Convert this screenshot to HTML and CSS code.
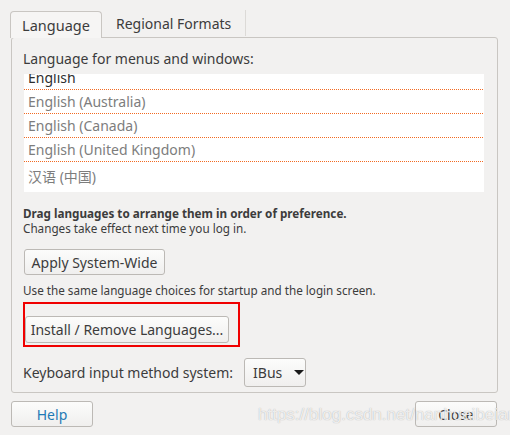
FILE: index.html
```html
<!DOCTYPE html>
<html>
<head>
<meta charset="utf-8">
<link rel="stylesheet" href="styles.css">
</head>
<body>
<div class="dialog">
  <div class="tabs">
    <div class="tab active">Language</div>
    <div class="tab">Regional Formats</div>
    <div class="tab-sep"></div>
  </div>
  <div class="panel">
    <div class="label">Language for menus and windows:</div>
    <div class="list">
      <div class="list-inner">
        <div class="row first">English</div>
        <div class="row">English (Australia)</div>
        <div class="row">English (Canada)</div>
        <div class="row">English (United Kingdom)</div>
        <div class="row last">汉语 (中国)</div>
      </div>
    </div>
    <div class="hint-bold">Drag languages to arrange them in order of preference.</div>
    <div class="hint">Changes take effect next time you log in.</div>
    <button class="btn apply">Apply System-Wide</button>
    <div class="hint use">Use the same language choices for startup and the login screen.</div>
    <div class="redbox">
      <button class="btn install">Install / Remove Languages...</button>
    </div>
    <div class="kbd">
      <span class="kbd-label">Keyboard input method system:</span>
      <button class="btn combo">IBus<span class="arrow"></span></button>
    </div>
  </div>
  <div class="footer">
    <button class="btn foot help">Help</button>
    <button class="btn foot close">Close</button>
  </div>
  <div class="watermark">https://blog.csdn.net/nanhuaibeian</div>
</div>
</body>
</html>
```
FILE: styles.css
```css
html, body {
  margin: 0;
  padding: 0;
}
body {
  background: #f2f1f0;
  width: 510px;
  height: 435px;
  overflow: hidden;
  font-family: "Noto Sans", "Noto Sans CJK SC", sans-serif;
  color: #3c3c3c;
}
.dialog {
  position: relative;
  padding: 10px 12px 0 11px;
  height: 425px;
}
.tabs {
  display: flex;
  align-items: stretch;
  height: 27px;
  margin-left: -1px;
}
.tab {
  font-size: 14px;
  display: flex;
  align-items: center;
  padding: 0 13px 0 14px;
  white-space: nowrap;
}
.tab.active {
  font-size: 14.5px;
  width: 92px;
  box-sizing: border-box;
  justify-content: center;
  padding: 0;
  border: 1px solid #c9c6c2;
  border-bottom: none;
  border-radius: 4px 4px 0 0;
  background: #f6f5f4;
  position: relative;
  top: 1px;
  z-index: 1;
}
.tab-sep {
  width: 1px;
  background: #dcdad7;
  margin: 0 0 1px 1px;
}
.panel {
  border: 1px solid #c9c6c2;
  border-radius: 3px;
  height: 356px;
  padding: 0 12px 0 11px;
  box-sizing: border-box;
  background: #f2f1f0;
}
.label {
  font-size: 14px;
  margin-top: 10px;
  height: 22px;
  line-height: 22px;
  white-space: nowrap;
}
.list {
  background: #ffffff;
  height: 118px;
  overflow: hidden;
  margin: 4px 1px 0 1px;
}
.list-inner {
  margin-top: -8px;
}
.row {
  height: 24px;
  line-height: 23px;
  font-size: 14px;
  padding-left: 4px;
  color: #7d7d7d;
  box-sizing: border-box;
  background-image: linear-gradient(to right, #f26a22 50%, transparent 50%);
  background-size: 2px 1px;
  background-position: left bottom;
  background-repeat: repeat-x;
  white-space: nowrap;
}
.row.first {
  color: #2e2e2e;
}
.row.last {
  background-image: none;
  height: 32px;
  line-height: 30px;
}
.hint-bold {
  font-size: 11.7px;
  font-weight: bold;
  margin-top: 14px;
  height: 15px;
  line-height: 15px;
  white-space: nowrap;
}
.hint {
  font-size: 11.7px;
  height: 15px;
  line-height: 15px;
  white-space: nowrap;
}
.btn {
  font-family: inherit;
  color: #3c3c3c;
  font-size: 14px;
  background: linear-gradient(#fcfcfb, #f0efee);
  border: 1px solid #bcb9b5;
  border-radius: 3px;
  padding: 0;
  display: flex;
  align-items: center;
  justify-content: center;
  box-sizing: border-box;
  white-space: nowrap;
}
.apply {
  margin: 13px 0 0 1px;
  height: 26px;
  width: 141px;
}
.use {
  margin-top: 8px;
}
.redbox {
  margin-top: 4px;
  width: 217px;
  height: 45px;
  border: 2px solid #f00000;
  box-sizing: border-box;
  padding-top: 12px;
}
.install {
  height: 27px;
  width: 204px;
}
.kbd {
  display: flex;
  align-items: center;
  margin-top: 11px;
}
.kbd-label {
  font-size: 14px;
  white-space: nowrap;
}
.combo {
  margin-left: 11px;
  height: 29px;
  width: 62px;
  justify-content: flex-start;
  padding-left: 8px;
}
.arrow {
  width: 0;
  height: 0;
  border-left: 5px solid transparent;
  border-right: 5px solid transparent;
  border-top: 5px solid #1a1a1a;
  margin-left: 12px;
}
.footer {
  display: flex;
  justify-content: space-between;
  margin-top: 8px;
  padding-right: 1px;
}
.foot {
  width: 82px;
  height: 26px;
}
.help {
  color: #1f7ab5;
}
.watermark {
  position: absolute;
  left: 258px;
  top: 405px;
  font-family: "Liberation Sans", sans-serif;
  font-size: 17px;
  color: rgba(255, 255, 255, 0.8);
  text-shadow: 0 0 1px rgba(110, 110, 110, 0.6);
  white-space: nowrap;
}
```
